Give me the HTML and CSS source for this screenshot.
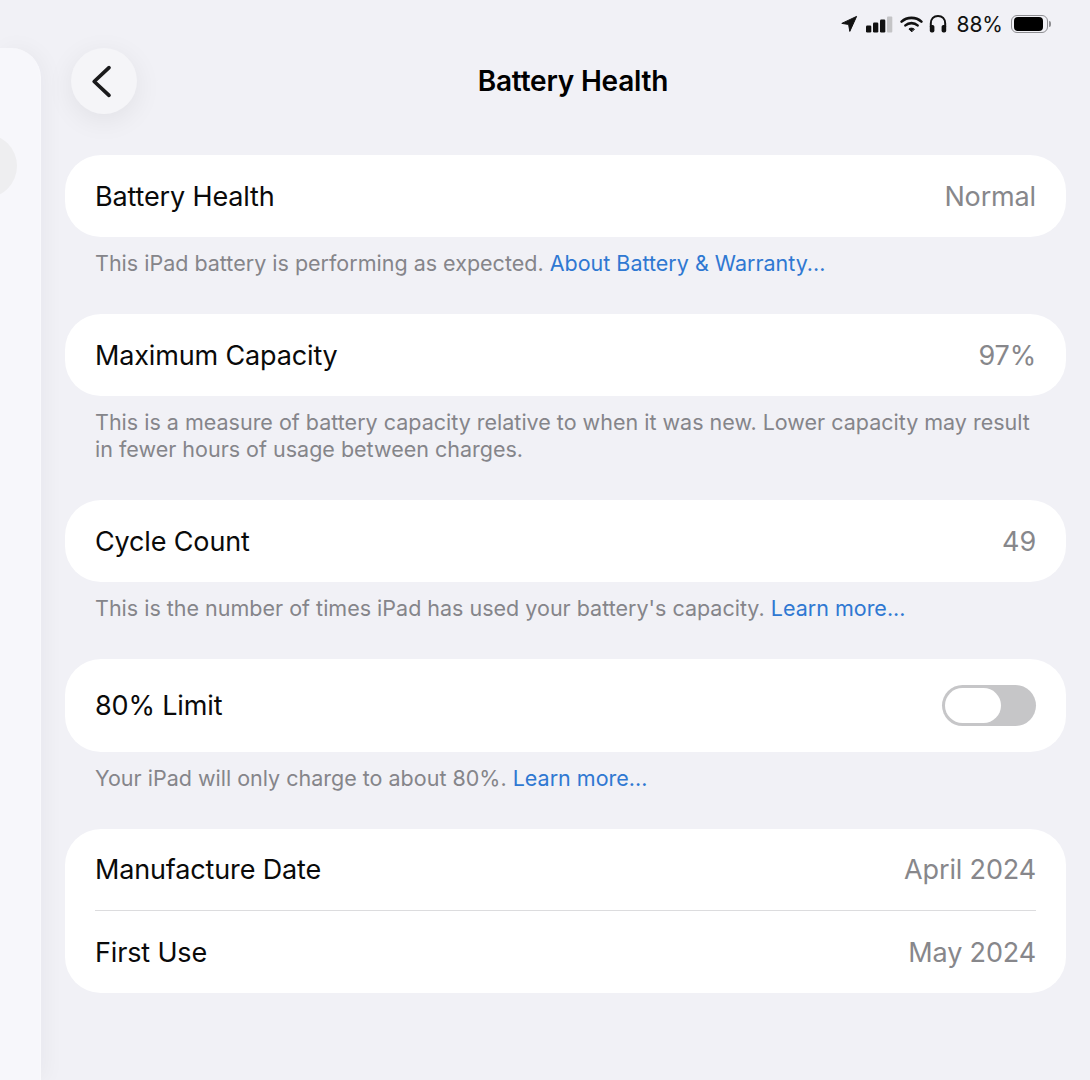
FILE: index.html
```html
<!DOCTYPE html>
<html>
<head>
    <title>Battery Health</title>
    <link rel="stylesheet" href="styles.css">
</head>
<body>
    <div class="status-bar">
        <svg class="ico-location" width="18" height="18" viewBox="0 0 18 18"><path d="M16.6 1.4 L1.8 8.4 L8.6 9.4 L9.8 16.4 Z" fill="#111" stroke="#111" stroke-width="1" stroke-linejoin="round"/></svg>
        <svg class="ico-signal" width="28" height="17" viewBox="0 0 28 17">
            <rect x="0" y="9.5" width="5.3" height="7" rx="1.2" fill="#111"/>
            <rect x="7" y="6.5" width="5.3" height="10" rx="1.2" fill="#111"/>
            <rect x="14" y="3.5" width="5.3" height="13" rx="1.2" fill="#111"/>
            <rect x="21" y="0.5" width="5.3" height="16" rx="1" fill="#c4c4c6"/>
        </svg>
        <svg class="ico-wifi" width="23" height="17" viewBox="0 0 23 17" fill="none" stroke="#111" stroke-linecap="round">
            <path d="M1.6 5.6 C7 0.6 16 0.6 21.4 5.6" stroke-width="2.6"/>
            <path d="M5.4 9.4 C8.8 6.4 14.2 6.4 17.6 9.4" stroke-width="2.6"/>
            <path d="M11.5 15.6 L8.9 13 C10.4 11.8 12.6 11.8 14.1 13 Z" fill="#111" stroke-width="1"/>
        </svg>
        <svg class="ico-headphones" width="18" height="18" viewBox="0 0 18 18" fill="none">
            <path d="M1.8 12 V8.6 C1.8 3.8 4.8 1 9 1 C13.2 1 16.2 3.8 16.2 8.6 V12" stroke="#111" stroke-width="2"/>
            <rect x="0.8" y="10" width="4.6" height="7.6" rx="1.8" fill="#111"/>
            <rect x="12.6" y="10" width="4.6" height="7.6" rx="1.8" fill="#111"/>
        </svg>
        <span class="battery-pct">88%</span>
        <div class="battery">
            <div class="battery-shell"><div class="battery-fill"></div></div>
            <div class="battery-cap"></div>
        </div>
    </div>

    <div class="page">
        <div class="sidebar">
            <div class="sidebar-dot"></div>
        </div>

        <div class="detail">
            <div class="nav">
                <div class="back-btn">
                    <svg width="26" height="34" viewBox="0 0 26 34" fill="none"><path d="M18 3.7 L3.2 17.5 L18 31.3" stroke="#1a1a1c" stroke-width="3.7" stroke-linecap="round" stroke-linejoin="round"/></svg>
                </div>
                <h1>Battery Health</h1>
            </div>

            <div class="card">
                <div class="row"><span>Battery Health</span><span class="value">Normal</span></div>
            </div>
            <p class="note">This iPad battery is performing as expected. <a href="#">About Battery &amp; Warranty...</a></p>

            <div class="card">
                <div class="row"><span>Maximum Capacity</span><span class="value">97%</span></div>
            </div>
            <p class="note">This is a measure of battery capacity relative to when it was new. Lower capacity may result in fewer hours of usage between charges.</p>

            <div class="card">
                <div class="row"><span>Cycle Count</span><span class="value">49</span></div>
            </div>
            <p class="note">This is the number of times iPad has used your battery's capacity. <a href="#">Learn more...</a></p>

            <div class="card">
                <div class="row row-tall"><span>80% Limit</span><div class="toggle"><div class="knob"></div></div></div>
            </div>
            <p class="note">Your iPad will only charge to about 80%. <a href="#">Learn more...</a></p>

            <div class="card">
                <div class="row row-split"><span>Manufacture Date</span><span class="value">April 2024</span></div>
                <div class="row"><span>First Use</span><span class="value">May 2024</span></div>
            </div>
        </div>
    </div>
</body>
</html>
```

FILE: styles.css
```css
html, body {
    margin: 0;
    height: 100%;
}

body {
    font-family: Inter, "Liberation Sans", sans-serif;
    background-color: #f1f1f6;
    color: #0a0a0a;
    position: relative;
    overflow: hidden;
}

.status-bar {
    position: absolute;
    top: 12px;
    right: 39px;
    height: 24px;
    display: flex;
    align-items: center;
    z-index: 2;
}

.ico-location {
    margin-right: 8px;
}

.ico-signal {
    margin-right: 6px;
}

.ico-wifi {
    margin-right: 6px;
}

.ico-headphones {
    margin-right: 9px;
}

.battery-pct {
    font-size: 21px;
    color: #111;
    margin-right: 8px;
}

.battery {
    display: flex;
    align-items: center;
}

.battery-shell {
    box-sizing: border-box;
    width: 37px;
    height: 18px;
    padding: 1px 2px;
    border: 1px solid #8e8e92;
    border-radius: 6px;
    display: flex;
}

.battery-fill {
    width: 29px;
    background-color: #000;
    border-radius: 4px;
}

.battery-cap {
    width: 2px;
    height: 6px;
    margin-left: 1px;
    background-color: #8e8e92;
    border-radius: 0 2px 2px 0;
}

.page {
    display: flex;
    height: 100%;
}

.sidebar {
    width: 40px;
    margin-top: 48px;
    flex-shrink: 0;
    background-color: #f7f7fb;
    border-right: 1px solid #f9f9fc;
    border-radius: 0 30px 0 0;
    box-shadow: 4px 0 22px rgba(0, 0, 40, 0.045);
    position: relative;
    overflow: hidden;
}

.sidebar-dot {
    position: absolute;
    top: 86px;
    left: -47px;
    width: 64px;
    height: 64px;
    border-radius: 50%;
    background-color: #eeeef0;
}

.detail {
    flex: 1;
    padding: 48px 24px 0 24px;
}

.nav {
    height: 107px;
    position: relative;
}

.nav h1 {
    margin: 0;
    padding-top: 16px;
    padding-left: 15px;
    font-size: 28px;
    line-height: 34px;
    font-weight: 600;
    text-align: center;
    letter-spacing: -0.2px;
    color: #000;
}

.back-btn {
    position: absolute;
    left: 6px;
    top: 0;
    width: 66px;
    height: 66px;
    border-radius: 50%;
    background-color: #f5f5f8;
    box-shadow: 0 6px 28px rgba(0, 0, 0, 0.07);
    display: flex;
    align-items: center;
    justify-content: center;
}

.card {
    background-color: #fff;
    border-radius: 36px;
    padding: 0 30px;
}

.row {
    height: 82px;
    display: flex;
    align-items: center;
    justify-content: space-between;
    font-size: 27px;
    letter-spacing: -0.15px;
}

.row-tall {
    height: 93px;
}

.row-split {
    border-bottom: 1px solid #dcdcde;
    box-sizing: border-box;
}

.value {
    color: #87878b;
}

.note {
    margin: 13px 30px 37px;
    font-size: 21.5px;
    line-height: 27px;
    color: #85858a;
}

.note a {
    color: #2f78d2;
    text-decoration: none;
}

.toggle {
    width: 94px;
    height: 41px;
    border-radius: 21px;
    background-color: #c6c6c8;
    display: flex;
    align-items: center;
    padding-left: 3px;
    box-sizing: border-box;
}

.knob {
    width: 56px;
    height: 35px;
    border-radius: 18px;
    background-color: #fff;
}
```
